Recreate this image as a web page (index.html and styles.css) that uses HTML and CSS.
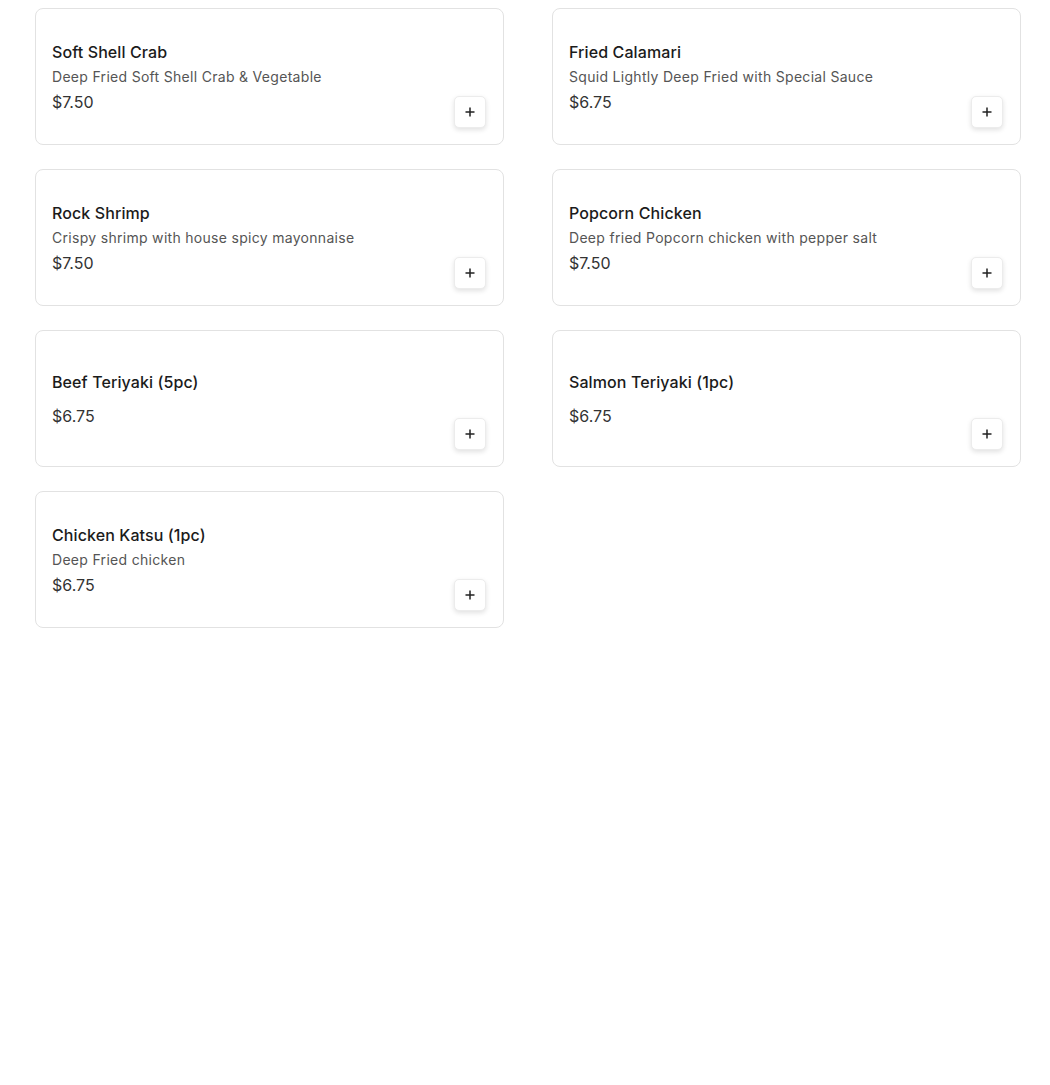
FILE: index.html
```html
<!DOCTYPE html>
<html lang="en">
<head>
    <meta charset="UTF-8">
    <title>Menu - Appetizers</title>
    <link rel="stylesheet" href="styles.css">
</head>
<body>
<div class="menu-grid" id="menuGrid">
    <div class="menu-item">
        <div class="item-info">
            <div class="item-name">Soft Shell Crab</div>
            <div class="item-desc">Deep Fried Soft Shell Crab &amp; Vegetable</div>
            <div class="item-price">$7.50</div>
        </div>
        <button class="add-btn" aria-label="Add"><svg viewBox="0 0 12 12" width="12" height="12"><path d="M6 1.5v9M1.5 6h9" stroke="#222" stroke-width="1.5"/></svg></button>
    </div>
    <div class="menu-item">
        <div class="item-info">
            <div class="item-name">Fried Calamari</div>
            <div class="item-desc">Squid Lightly Deep Fried with Special Sauce</div>
            <div class="item-price">$6.75</div>
        </div>
        <button class="add-btn" aria-label="Add"><svg viewBox="0 0 12 12" width="12" height="12"><path d="M6 1.5v9M1.5 6h9" stroke="#222" stroke-width="1.5"/></svg></button>
    </div>
    <div class="menu-item">
        <div class="item-info">
            <div class="item-name">Rock Shrimp</div>
            <div class="item-desc">Crispy shrimp with house spicy mayonnaise</div>
            <div class="item-price">$7.50</div>
        </div>
        <button class="add-btn" aria-label="Add"><svg viewBox="0 0 12 12" width="12" height="12"><path d="M6 1.5v9M1.5 6h9" stroke="#222" stroke-width="1.5"/></svg></button>
    </div>
    <div class="menu-item">
        <div class="item-info">
            <div class="item-name">Popcorn Chicken</div>
            <div class="item-desc">Deep fried Popcorn chicken with pepper salt</div>
            <div class="item-price">$7.50</div>
        </div>
        <button class="add-btn" aria-label="Add"><svg viewBox="0 0 12 12" width="12" height="12"><path d="M6 1.5v9M1.5 6h9" stroke="#222" stroke-width="1.5"/></svg></button>
    </div>
    <div class="menu-item">
        <div class="item-info no-desc">
            <div class="item-name">Beef Teriyaki (5pc)</div>
            <div class="item-price">$6.75</div>
        </div>
        <button class="add-btn" aria-label="Add"><svg viewBox="0 0 12 12" width="12" height="12"><path d="M6 1.5v9M1.5 6h9" stroke="#222" stroke-width="1.5"/></svg></button>
    </div>
    <div class="menu-item">
        <div class="item-info no-desc">
            <div class="item-name">Salmon Teriyaki (1pc)</div>
            <div class="item-price">$6.75</div>
        </div>
        <button class="add-btn" aria-label="Add"><svg viewBox="0 0 12 12" width="12" height="12"><path d="M6 1.5v9M1.5 6h9" stroke="#222" stroke-width="1.5"/></svg></button>
    </div>
    <div class="menu-item">
        <div class="item-info">
            <div class="item-name">Chicken Katsu (1pc)</div>
            <div class="item-desc">Deep Fried chicken</div>
            <div class="item-price">$6.75</div>
        </div>
        <button class="add-btn" aria-label="Add"><svg viewBox="0 0 12 12" width="12" height="12"><path d="M6 1.5v9M1.5 6h9" stroke="#222" stroke-width="1.5"/></svg></button>
    </div>
</div>
</body>
</html>
```
FILE: styles.css
```css
body { font-family: Inter, "Noto Sans", sans-serif; background: #fff; margin: 0; color: #222; }
.menu-grid { display: grid; grid-template-columns: 1fr 1fr; column-gap: 48px; row-gap: 24px; padding: 8px 29px 0 35px; }
.menu-item { position: relative; display: flex; align-items: center; height: 135px; border: 1px solid #e2e2e2; border-radius: 8px; padding: 0 16px; }
.item-info { display: flex; flex-direction: column; gap: 4px; }
.item-name { font-size: 16px; font-weight: 500; line-height: 24px; letter-spacing: 0.1px; color: #1b1b1b; }
.item-desc { font-size: 14px; line-height: 18px; letter-spacing: 0.3px; color: #555; }
.item-price { font-size: 16px; line-height: 24px; color: #333; }
.no-desc .item-price { margin-top: 6px; }
.add-btn { position: absolute; right: 17px; bottom: 16px; width: 32px; height: 32px; display: flex; align-items: center; justify-content: center; padding: 0; background: #fff; border: 1px solid #ececec; border-radius: 5px; box-shadow: 0 2px 5px rgba(0,0,0,0.12); cursor: pointer; }
```
